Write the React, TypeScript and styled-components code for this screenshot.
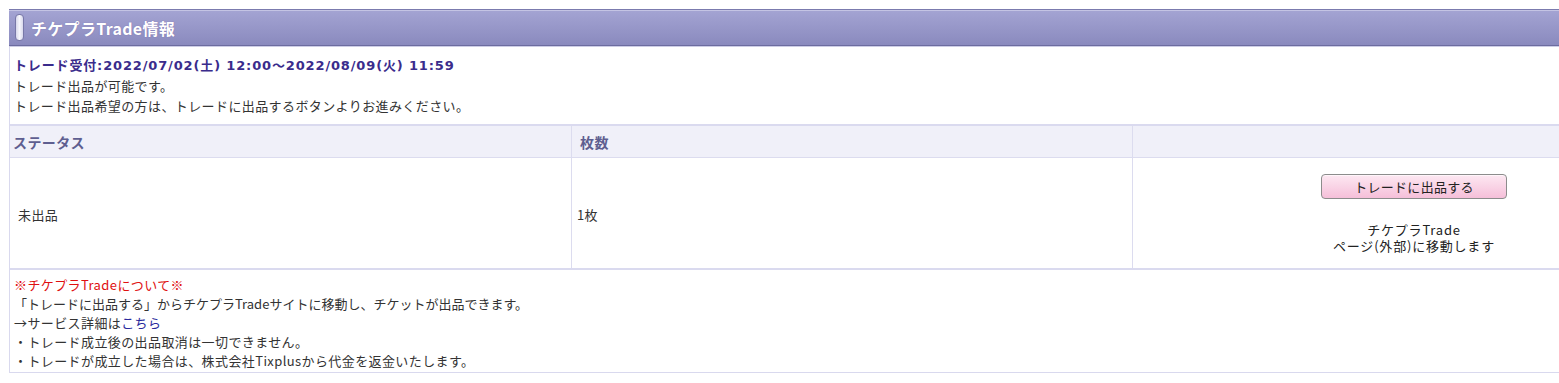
import React from "react";
import styled, { createGlobalStyle } from "styled-components";

const Global = createGlobalStyle`
  html, body { margin: 0; padding: 0; background: #fff; overflow: hidden; }
  body { font-family: "Noto Sans CJK JP", "Noto Sans", sans-serif; font-size: 13px; color: #333; letter-spacing: 0.4px; }
`;

const Section = styled.section`
  width: 1686px;
  margin: 9px 0 0 9px;
`;

const Header = styled.div`
  height: 35px;
  border-top: 1px solid #7b7bae;
  border-bottom: 1px solid #6c6c9f;
  box-shadow: inset 0 1px 0 #c4c4e4, 0 1px 0 #cdcde6;
  background: linear-gradient(#a4a4d3, #8a8abe);
  display: flex;
  align-items: center;
  gap: 7px;
  padding-left: 6px;
  margin-bottom: 1px;
`;

const Pill = styled.span`
  width: 7px;
  height: 25px;
  border-radius: 4px;
  border: 1px solid #7878a8;
  background: linear-gradient(90deg, #d8d8ec, #f6f6fc 50%, #d8d8ec);
`;

const Title = styled.h2`
  margin: 0;
  font-size: 16px;
  font-weight: 700;
  color: #fff;
  letter-spacing: 0.3px;
  text-shadow: 0 0 1px rgba(90, 60, 140, 0.5);
`;

const Box = styled.div`
  border-left: 1px solid #d9d9ee;
  border-bottom: 1px solid #d9d9ee;
`;

const Intro = styled.div`
  padding: 9px 4px 8px 4px;
  line-height: 20px;
`;

const Period = styled.div`
  color: #3a2c8c;
  font-weight: 700;
  font-family: "DejaVu Sans", "Noto Sans CJK JP", sans-serif;
  letter-spacing: 0.85px;
`;

const Grid = styled.div`
  display: grid;
  grid-template-columns: 562px 561px 562px;
  border-top: 2px solid #dadaef;
  border-bottom: 2px solid #dadaef;
`;

const HeadCell = styled.div<{ $pad: number; $last?: boolean }>`
  background: #f0f0f9;
  height: 31px;
  display: flex;
  align-items: center;
  padding-left: ${(p) => p.$pad}px;
  border-right: ${(p) => (p.$last ? "none" : "1px solid #dcdcef")};
  border-bottom: 1px solid #dcdcef;
  color: #5e5e90;
  font-size: 14px;
  font-weight: 700;
`;

const BodyCell = styled.div<{ $pad: number; $last?: boolean; $center?: boolean }>`
  display: flex;
  flex-direction: column;
  justify-content: center;
  align-items: ${(p) => (p.$center ? "center" : "flex-start")};
  padding: 16px 0 14px ${(p) => p.$pad}px;
  border-right: ${(p) => (p.$last ? "none" : "1px solid #dcdcef")};
  color: #333;
`;

const TradeButton = styled.button`
  width: 186px;
  height: 25px;
  border: 1px solid #8c8c8c;
  border-radius: 4px;
  background: linear-gradient(#fde8f2, #f5bfd9);
  box-shadow: inset 0 1px 0 #fff5fa;
  font-family: "Noto Sans CJK JP", sans-serif;
  font-size: 13px;
  letter-spacing: 0.3px;
  color: #222;
  cursor: pointer;
  padding: 0;
`;

const Caption = styled.div`
  margin-top: 23px;
  text-align: center;
  line-height: 16px;
  color: #222;
  letter-spacing: 0.8px;
`;

const Notes = styled.div`
  padding: 5px 4px 2px 4px;
  line-height: 19px;
`;

const Red = styled.div`
  color: #e01010;
`;

const Wide = styled.div`
  letter-spacing: 0;
`;

const Link = styled.a`
  color: #2a2a9c;
  text-decoration: none;
`;

export default function App() {
  return (
    <>
      <Global />
      <Section>
        <Header>
          <Pill />
          <Title>チケプラTrade情報</Title>
        </Header>
        <Box>
          <Intro>
            <Period>トレード受付:2022/07/02(土) 12:00～2022/08/09(火) 11:59</Period>
            <div>トレード出品が可能です。</div>
            <div>トレード出品希望の方は、トレードに出品するボタンよりお進みください。</div>
          </Intro>
          <Grid>
            <HeadCell $pad={3}>ステータス</HeadCell>
            <HeadCell $pad={8}>枚数</HeadCell>
            <HeadCell $pad={0} $last />
            <BodyCell $pad={8}>未出品</BodyCell>
            <BodyCell $pad={5}>1枚</BodyCell>
            <BodyCell $pad={0} $last $center>
              <TradeButton>トレードに出品する</TradeButton>
              <Caption>
                チケプラTrade
                <br />
                ページ(外部)に移動します
              </Caption>
            </BodyCell>
          </Grid>
          <Notes>
            <Red>※チケプラTradeについて※</Red>
            <Wide>「トレードに出品する」からチケプラTradeサイトに移動し、チケットが出品できます。</Wide>
            <div>
              →サービス詳細は<Link href="#">こちら</Link>
            </div>
            <div>・トレード成立後の出品取消は一切できません。</div>
            <div>・トレードが成立した場合は、株式会社Tixplusから代金を返金いたします。</div>
          </Notes>
        </Box>
      </Section>
    </>
  );
}
